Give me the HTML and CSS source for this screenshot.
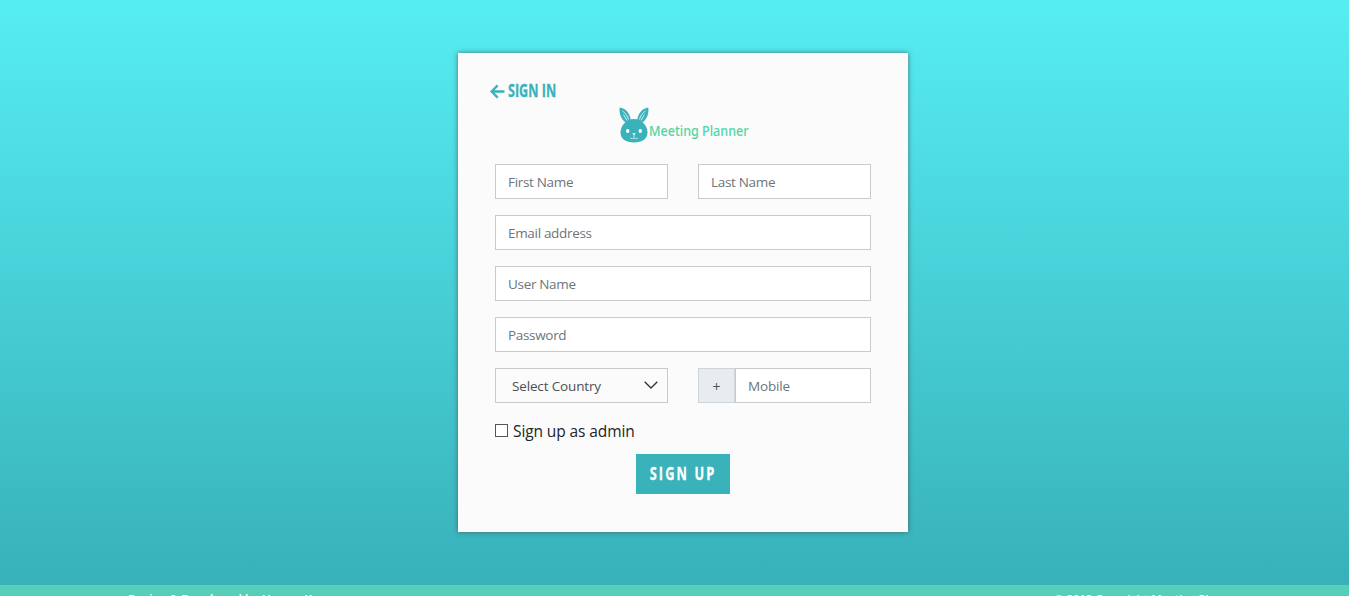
FILE: index.html
```html
<!DOCTYPE html>
<html lang="en">
<head>
<meta charset="utf-8">
<title>Meeting Planner</title>
<link rel="stylesheet" href="styles.css">
</head>
<body>
<main class="page">
  <form class="card">
    <a class="back">
      <svg class="back-arrow" viewBox="0 0 14 14"><path d="M13.500 7H2M7.200 1.300L1.500 7l5.700 5.700"/></svg>
      <span class="back-label">SIGN IN</span>
    </a>
    <div class="brand">
      <svg class="rabbit" viewBox="0 0 30 36">
        <g fill="#39b2ba">
          <path d="M.7 .5C6 1 11 6 11.800 13L6.500 15.500C1.500 11.500 0 6 .7 .5Z"/>
          <path d="M29.300 .5C24 1 19 6 18.200 13L23.500 15.500C28.500 11.500 30 6 29.300 .5Z"/>
          <path d="M15 12C22 12 28.500 18 28.500 25.500C28.500 32 23 35.500 15 35.500S1.500 32 1.500 25.500C1.500 18 8 12 15 12Z"/>
        </g>
        <path d="M3.500 4C6.500 6 8.800 9 9.500 12.500M4.500 7.500L8 13.500M26.500 4C23.500 6 21.200 9 20.500 12.500M25.500 7.500L22 13.500" fill="none" stroke="#e2f5f5" stroke-width=".9"/>
        <g fill="#fff"><ellipse cx="8.700" cy="24" rx="1.700" ry="2.100"/><ellipse cx="21.300" cy="24" rx="1.700" ry="2.100"/><path d="M13.200 26.300h3.600L15 28.500Z"/></g>
        <path d="M15 28v3M11 31Q13 32.500 15 31Q17 32.500 19 31" fill="none" stroke="#c5eeee" stroke-width=".8"/>
      </svg>
      <span class="brand-name">Meeting Planner</span>
    </div>
    <div class="fields">
      <div class="row">
        <input class="control" placeholder="First Name">
        <input class="control" placeholder="Last Name">
      </div>
      <input class="control" placeholder="Email address">
      <input class="control" placeholder="User Name">
      <input class="control" placeholder="Password">
      <div class="row">
        <div class="control select">
          <span>Select Country</span>
          <svg class="chevron" viewBox="0 0 14 8"><path d="M.7.7L7 7L13.300.7"/></svg>
        </div>
        <div class="phone">
          <span class="prefix">+</span>
          <input class="control mobile" placeholder="Mobile">
        </div>
      </div>
      <label class="admin"><span class="box"></span><span class="admin-label">Sign up as admin</span></label>
    </div>
    <button class="submit" type="button"><span class="submit-label">SIGN UP</span></button>
  </form>
</main>
<footer class="footer">
  <span class="credit">Design &amp; Developed by Hamza K</span>
  <span>© 2019 Copyright Meeting Planner</span>
</footer>
</body>
</html>
```
FILE: styles.css
```css
* { box-sizing: border-box; }
body { margin: 0; height: 596px; overflow: hidden; font-family: "Open Sans", sans-serif; color: #212529; }
.page { height: 585px; padding-top: 53px; padding-left: 458px; background: linear-gradient(#56edf3, #38b1b9); }
.card { width: 450px; height: 479px; padding: 27px 37px 0; background: #fbfbfb; box-shadow: 0 0 5px rgba(70, 80, 80, .8); display: flex; flex-direction: column; }
.back { display: flex; align-items: center; height: 20px; margin-left: -5px; color: #39b2ba; }
.back-arrow { width: 15px; height: 15px; margin: 2px 3px 0 0; fill: none; stroke: #39b2ba; stroke-width: 2.2; }
.back-label, .submit-label { display: inline-block; font-family: "Open Sans", sans-serif; font-weight: 700; -webkit-text-stroke: .3px currentColor; white-space: nowrap; }
.back-label { font-size: 18px; line-height: 20px; transform: scaleX(.7); transform-origin: left; }
.brand { display: flex; height: 36px; margin: 7px 0 0 124px; }
.rabbit { width: 30px; height: 36px; flex: none; }
.brand-name { font: 500 13.500px/18px "Noto Sans", sans-serif; color: #50d5a5; margin-top: 15px; white-space: nowrap; transform-origin: left; transform: scaleX(.93); }
.fields { display: flex; flex-direction: column; gap: 16px; margin-top: 21px; }
.row { display: grid; grid-template-columns: 173px 173px; gap: 30px; height: 35px; }
.control { width: 100%; height: 35px; border: 1px solid #c8cacb; border-radius: 0; background: #fff; padding: 0 12px; font: 13.500px "Open Sans", sans-serif; letter-spacing: -.32px; color: #495057; }
.control::placeholder { color: #6c757d; opacity: 1; }
.select { display: flex; align-items: center; justify-content: space-between; padding: 0 9px 0 16px; background: #fbfbfb; letter-spacing: -.15px; }
.chevron { width: 14px; height: 8px; margin-top: -2px; fill: none; stroke: #333; stroke-width: 1.300; }
.phone { display: flex; height: 35px; }
.prefix { width: 37px; height: 35px; flex: none; border: 1px solid #ced4da; background: #e9ecef; color: #495057; font-size: 14px; line-height: 35px; text-align: center; }
.mobile { flex: 1; min-width: 0; letter-spacing: -.15px; }
.admin { display: flex; align-items: center; height: 24px; }
.box { width: 13px; height: 13px; margin: -2px 5px 0 0; border: 1px solid #555; background: #fff; }
.admin-label { font-size: 15.500px; letter-spacing: -.1px; }
.submit { align-self: center; width: 94px; height: 40px; margin-top: 11px; padding: 0 0 2px; border: 0; background: #39b2ba; color: #fff; display: flex; align-items: center; justify-content: center; }
.submit-label { font-size: 18px; letter-spacing: 3px; transform: scaleX(.71); }
.footer { display: flex; justify-content: space-between; height: 11px; padding: 6px 108px 0 128px; background: #55cfb9; color: #fff; font: 600 11.300px/16px "Open Sans", sans-serif; overflow: hidden; white-space: nowrap; }
.credit { font-size: 11.800px; }
```
